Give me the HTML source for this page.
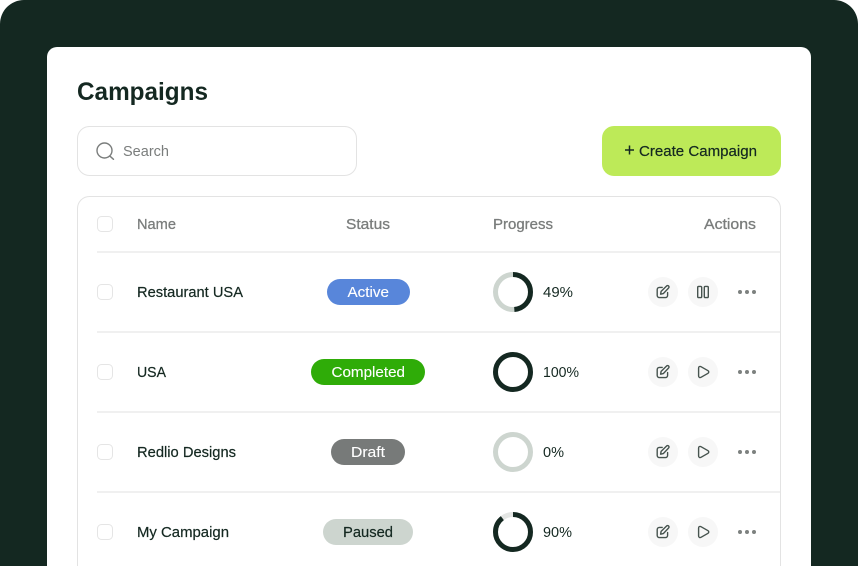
<!DOCTYPE html>
<html><head><meta charset="utf-8"><title>Campaigns</title>
<style>
html,body{margin:0;padding:0;background:#fff;width:858px;height:566px;overflow:hidden}
svg{display:block}
text{font-family:"Liberation Sans",Arial,sans-serif;font-size:14.5px;fill:#142821}
.m{stroke:#142821;stroke-width:.2px}
.h{fill:#7a7d7c;stroke:#7a7d7c;stroke-width:.3px}
.w{fill:#fff;stroke:#fff;stroke-width:.12px}
.ic{fill:none;stroke:#46534e;stroke-width:1.4;stroke-linecap:round;stroke-linejoin:round}
</style></head><body>
<svg width="858" height="566" viewBox="0 0 858 566" xmlns="http://www.w3.org/2000/svg">
<defs>
<g id="edit"><circle cx="0" cy="0" r="15" fill="#f7f7f7"/><path class="ic" d="M-0.8 -4.6H-3.6A2.2 2.2 0 0 0 -5.8 -2.4V3.4A2.2 2.2 0 0 0 -3.6 5.6H2.4A2.2 2.2 0 0 0 4.6 3.4V0.6"/><path class="ic" d="M-2.4 2.2L-1.9 -0.6L3.6 -6A1.3 1.3 0 0 1 5.6 -4L0.3 1.6Z"/></g>
<g id="play"><circle cx="0" cy="0" r="15" fill="#f7f7f7"/><path class="ic" d="M-4.4 -4C-4.4 -5.4 -3.2 -6 -2 -5.3L5 -1.3C6 -.7 6 .7 5 1.3L-2 5.3C-3.2 6 -4.4 5.4 -4.4 4Z"/></g>
<g id="pause"><circle cx="0" cy="0" r="15" fill="#f7f7f7"/><rect class="ic" x="-5.3" y="-5.6" width="4" height="11.2" rx="1"/><rect class="ic" x="1.3" y="-5.6" width="4" height="11.2" rx="1"/></g>
<g id="dots" fill="#7d817f"><circle cx="-7" cy="0" r="2"/><circle cx="0" cy="0" r="2"/><circle cx="7" cy="0" r="2"/></g>
</defs>

<path d="M0 566V24A24 24 0 0 1 24 0H834A24 24 0 0 1 858 24V566Z" fill="#142821"/>
<path d="M47 566V57A10 10 0 0 1 57 47H801A10 10 0 0 1 811 57V566Z" fill="#fff"/>

<text x="77" y="100" style="font-size:25px;font-weight:700" textLength="131" lengthAdjust="spacingAndGlyphs">Campaigns</text>

<rect x="77.5" y="126.5" width="279" height="49" rx="12" fill="#fff" stroke="#e3e3e3"/>
<circle cx="104.5" cy="150.5" r="7.5" fill="none" stroke="#7a7d7c" stroke-width="1.4"/>
<path d="M110 156.2L113.5 159.3" stroke="#7a7d7c" stroke-width="1.4" stroke-linecap="round"/>
<text x="123" y="156" style="fill:#7a7d7c" textLength="46" lengthAdjust="spacingAndGlyphs">Search</text>

<rect x="602" y="126" width="179" height="50" rx="12" fill="#bdea58"/>
<path d="M629.5 145.5V154.5M625 150H634" stroke="#142821" stroke-width="1.5"/>
<text x="639" y="156" class="m" textLength="118" lengthAdjust="spacingAndGlyphs">Create Campaign</text>

<path d="M77.5 566V208.5A12 12 0 0 1 89.5 196.5H768.5A12 12 0 0 1 780.5 208.5V566" fill="#fff" stroke="#e3e3e3"/>

<rect x="97.5" y="216.5" width="15" height="15" rx="4" fill="#fff" stroke="#e5e5e5"/>
<text x="137" y="229" class="h" textLength="39" lengthAdjust="spacingAndGlyphs">Name</text>
<text x="346" y="229" class="h" textLength="44" lengthAdjust="spacingAndGlyphs">Status</text>
<text x="493" y="229" class="h" textLength="60" lengthAdjust="spacingAndGlyphs">Progress</text>
<text x="704" y="229" class="h" textLength="52" lengthAdjust="spacingAndGlyphs">Actions</text>

<g fill="#f0f0f0">
<rect x="97" y="251" width="683" height="2"/>
<rect x="97" y="331" width="683" height="2"/>
<rect x="97" y="411" width="683" height="2"/>
<rect x="97" y="491" width="683" height="2"/>
</g>

<!-- Row 1 -->
<rect x="97.5" y="284.5" width="15" height="15" rx="4" fill="#fff" stroke="#e5e5e5"/>
<text x="137" y="297" class="m" textLength="106" lengthAdjust="spacingAndGlyphs">Restaurant USA</text>
<rect x="327" y="279" width="83" height="26" rx="13" fill="#5886da"/>
<text x="347.5" y="297" class="w" textLength="41.5" lengthAdjust="spacingAndGlyphs">Active</text>
<circle cx="513" cy="292" r="17.5" fill="none" stroke="#cdd5cf" stroke-width="5"/>
<circle cx="513" cy="292" r="17.5" fill="none" stroke="#142821" stroke-width="5" pathLength="100" stroke-dasharray="49 100" transform="rotate(-90 513 292)"/>
<text x="543" y="297" textLength="30" lengthAdjust="spacingAndGlyphs">49%</text>
<use href="#edit" x="663" y="292"/><use href="#pause" x="703" y="292"/><use href="#dots" x="747" y="292"/>

<!-- Row 2 -->
<rect x="97.5" y="364.5" width="15" height="15" rx="4" fill="#fff" stroke="#e5e5e5"/>
<text x="137" y="377" class="m" textLength="29" lengthAdjust="spacingAndGlyphs">USA</text>
<rect x="311" y="359" width="114" height="26" rx="13" fill="#2fac08"/>
<text x="331.5" y="377" class="w" textLength="73.5" lengthAdjust="spacingAndGlyphs">Completed</text>
<circle cx="513" cy="372" r="17.5" fill="none" stroke="#142821" stroke-width="5"/>
<text x="543" y="377" textLength="36" lengthAdjust="spacingAndGlyphs">100%</text>
<use href="#edit" x="663" y="372"/><use href="#play" x="703" y="372"/><use href="#dots" x="747" y="372"/>

<!-- Row 3 -->
<rect x="97.5" y="444.5" width="15" height="15" rx="4" fill="#fff" stroke="#e5e5e5"/>
<text x="137" y="457" class="m" textLength="99" lengthAdjust="spacingAndGlyphs">Redlio Designs</text>
<rect x="331" y="439" width="74" height="26" rx="13" fill="#777a79"/>
<text x="351" y="457" class="w" textLength="34" lengthAdjust="spacingAndGlyphs">Draft</text>
<circle cx="513" cy="452" r="17.5" fill="none" stroke="#cdd5cf" stroke-width="5"/>
<text x="543" y="457" textLength="21" lengthAdjust="spacingAndGlyphs">0%</text>
<use href="#edit" x="663" y="452"/><use href="#play" x="703" y="452"/><use href="#dots" x="747" y="452"/>

<!-- Row 4 -->
<rect x="97.5" y="524.5" width="15" height="15" rx="4" fill="#fff" stroke="#e5e5e5"/>
<text x="137" y="537" class="m" textLength="92" lengthAdjust="spacingAndGlyphs">My Campaign</text>
<rect x="323" y="519" width="90" height="26" rx="13" fill="#cdd5cf"/>
<text x="343" y="537" class="m" textLength="50" lengthAdjust="spacingAndGlyphs">Paused</text>
<circle cx="513" cy="532" r="17.5" fill="none" stroke="#e4e6e4" stroke-width="5"/>
<circle cx="513" cy="532" r="17.5" fill="none" stroke="#142821" stroke-width="5" pathLength="100" stroke-dasharray="90 100" transform="rotate(-90 513 532)"/>
<text x="543" y="537" textLength="29" lengthAdjust="spacingAndGlyphs">90%</text>
<use href="#edit" x="663" y="532"/><use href="#play" x="703" y="532"/><use href="#dots" x="747" y="532"/>
</svg>
</body></html>
